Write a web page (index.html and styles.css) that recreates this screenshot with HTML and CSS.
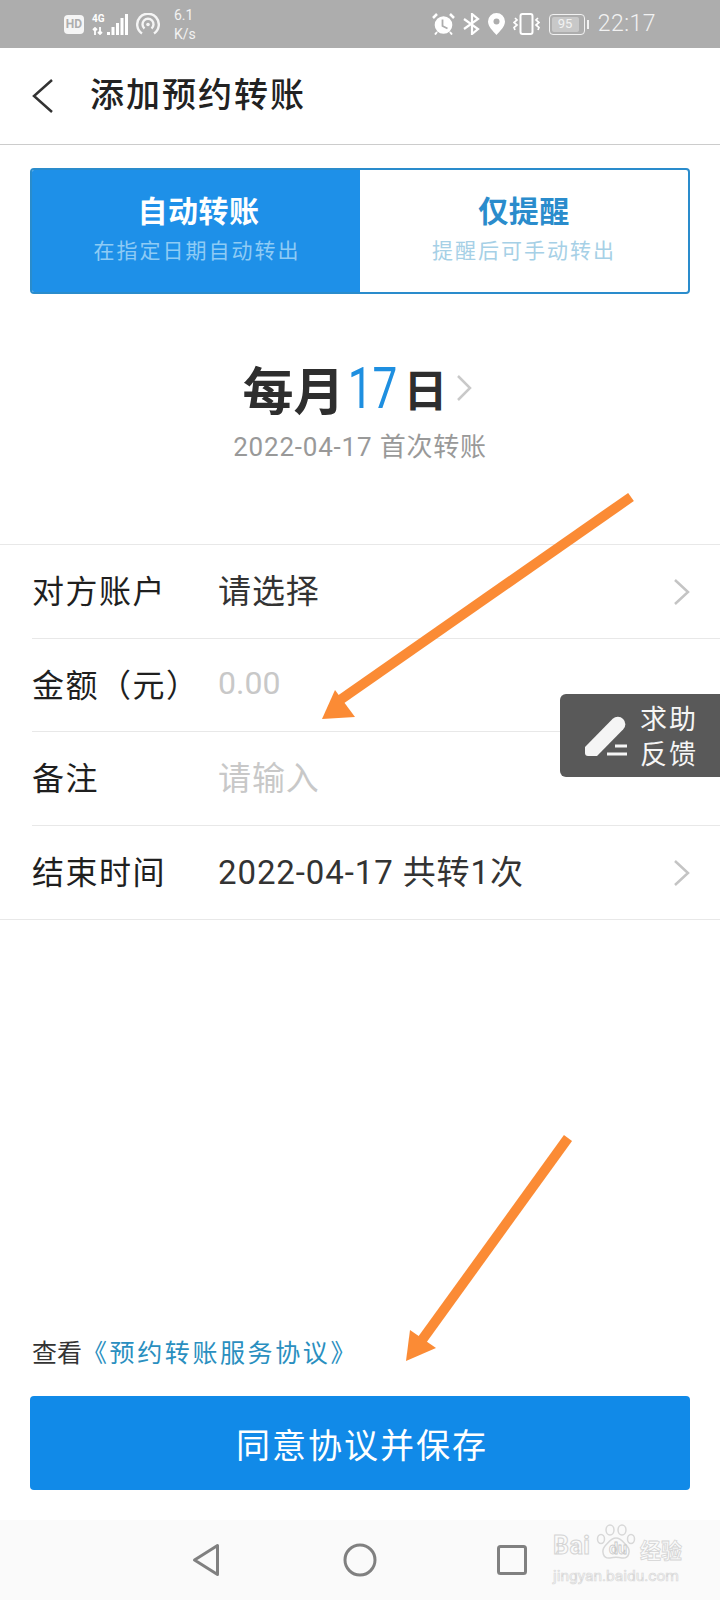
FILE: index.html
```html
<!DOCTYPE html>
<html lang="zh-CN">

<head>
    <meta charset="UTF-8">
    <meta name="viewport" content="width=device-width, initial-scale=1.0">
    <title>添加预约转账</title>
    <link rel="stylesheet" href="styles.css">
</head>

<body>

    <div class="page">

        <div class="status-bar">
            <div class="status-left">
                <span class="hd-badge">HD</span>
                <div class="signal">
                    <div class="signal-type">
                        <span class="net">4G</span>
                        <svg width="13" height="8" viewBox="0 0 13 8">
                            <path d="M3 8V1M1 3l2-2 2 2M8 0v7M6 5l2 2 2-2" fill="none" stroke="#fff" stroke-width="1.800" />
                        </svg>
                    </div>
                    <svg width="21" height="21" viewBox="0 0 21 21">
                        <rect x="0" y="18" width="3" height="3" fill="#fff" />
                        <rect x="4.500" y="13" width="3" height="8" fill="#fff" />
                        <rect x="9" y="9" width="3" height="12" fill="#fff" />
                        <rect x="13.500" y="4" width="3" height="17" fill="#fff" />
                        <rect x="18" y="0" width="3" height="21" fill="#fff" />
                    </svg>
                </div>
                <svg class="hotspot" width="24" height="22" viewBox="0 0 24 22" fill="none" stroke="#f5f5f5" stroke-width="2.400">
                    <path d="M6 20.500a10.800 10.800 0 1 1 12 0" />
                    <path d="M8.500 15.500a5.500 5.500 0 1 1 7 0" />
                    <circle cx="12" cy="11.500" r="1.800" fill="#f5f5f5" stroke="none" />
                </svg>
                <div class="speed">
                    <span>6.1</span>
                    <span>K/s</span>
                </div>
            </div>
            <div class="status-right">
                <svg width="23" height="22" viewBox="0 0 23 22">
                    <circle cx="11.500" cy="12" r="8.800" fill="#fff" />
                    <path d="M10.500 6.500v6.500l5 2.500" fill="none" stroke="#adadad" stroke-width="1.800" />
                    <path d="M1 5l4-4M22 5l-4-4" stroke="#fff" stroke-width="2.500" />
                    <path d="M5 19l-2 2.500M18 19l2 2.500" stroke="#fff" stroke-width="2" />
                </svg>
                <svg width="17" height="22" viewBox="0 0 17 22" fill="none" stroke="#fff" stroke-width="2.200">
                    <path d="M1 6l14 10-6 5V1l6 5L1 16" />
                </svg>
                <svg width="17" height="22" viewBox="0 0 17 22">
                    <path d="M8.500 0a8.500 8.500 0 0 1 8.500 8.500c0 5-5 9.500-8.500 13.500C5 18 0 13.500 0 8.500A8.500 8.500 0 0 1 8.500 0z" fill="#fff" />
                    <circle cx="8.500" cy="8.500" r="3" fill="#adadad" />
                </svg>
                <svg width="27" height="22" viewBox="0 0 27 22" fill="none" stroke="#fff" stroke-width="2">
                    <rect x="7.500" y="1" width="12" height="20" rx="2" />
                    <path d="M2 5l2 2-3 2.500 3 2.500-3 2.500L2 17M25 5l-2 2 3 2.500-3 2.500 3 2.500-1 2.500" stroke-width="1.700" />
                </svg>
                <div class="battery">
                    <div class="battery-body"><span class="battery-level">95</span></div>
                    <div class="battery-tip"></div>
                </div>
                <span class="clock">22:17</span>
            </div>
        </div>

        <div class="title-bar">
            <svg class="back" width="24" height="36" viewBox="0 0 24 36">
                <path d="M21 2L3 18l18 16" fill="none" stroke="#333" stroke-width="2.500" />
            </svg>
            <h1>添加预约转账</h1>
        </div>

        <div class="mode-tabs">
            <div class="mode-tab active">
                <div class="mode-name">自动转账</div>
                <div class="mode-desc">在指定日期自动转出</div>
            </div>
            <div class="mode-tab">
                <div class="mode-name">仅提醒</div>
                <div class="mode-desc">提醒后可手动转出</div>
            </div>
        </div>

        <div class="schedule">
            <div class="schedule-main">
                <span>每月</span><span class="day">17</span><span class="day-unit">日</span>
                <svg width="16" height="28" viewBox="0 0 16 28">
                    <path d="M2 2l12 12L2 26" fill="none" stroke="#c9c9c9" stroke-width="2.500" />
                </svg>
            </div>
            <div class="schedule-sub">2022-04-17 首次转账</div>
        </div>

        <div class="form-list">
            <div class="form-row">
                <div class="form-inner">
                    <span class="form-label">对方账户</span>
                    <span class="form-value">请选择</span>
                    <svg class="row-arrow" width="18" height="28" viewBox="0 0 18 28">
                        <path d="M2 2l13 12L2 26" fill="none" stroke="#c4c4c4" stroke-width="2.500" />
                    </svg>
                </div>
            </div>
            <div class="form-row">
                <div class="form-inner">
                    <span class="form-label">金额（元）</span>
                    <span class="form-value placeholder amount">0.00</span>
                </div>
            </div>
            <div class="form-row">
                <div class="form-inner">
                    <span class="form-label">备注</span>
                    <span class="form-value placeholder">请输入</span>
                </div>
            </div>
            <div class="form-row">
                <div class="form-inner">
                    <span class="form-label">结束时间</span>
                    <span class="form-value">2022-04-17 共转1次</span>
                    <svg class="row-arrow" width="18" height="28" viewBox="0 0 18 28">
                        <path d="M2 2l13 12L2 26" fill="none" stroke="#c4c4c4" stroke-width="2.500" />
                    </svg>
                </div>
            </div>
        </div>

        <div class="bottom-area">
            <div class="agreement">查看<a>《预约转账服务协议》</a></div>
            <button class="save-btn">同意协议并保存</button>
        </div>

        <div class="nav-bar">
            <svg class="nav-back" width="28" height="34" viewBox="0 0 28 34">
                <path d="M25.500 2.500v29L2.500 17z" fill="none" stroke="#808080" stroke-width="3" stroke-linejoin="round" />
            </svg>
            <svg class="nav-home" width="34" height="34" viewBox="0 0 34 34">
                <circle cx="17" cy="17" r="15" fill="none" stroke="#808080" stroke-width="3" />
            </svg>
            <svg class="nav-recent" width="30" height="30" viewBox="0 0 30 30">
                <rect x="1.500" y="1.500" width="27" height="27" rx="2" fill="none" stroke="#808080" stroke-width="3" />
            </svg>
        </div>

        <div class="help-float">
            <svg width="42" height="42" viewBox="0 0 42 42">
                <path d="M0 32L27.700 3.700A7.500 7.500 0 0 1 38.300 14.300L12 41H3a3 3 0 0 1-3-3z" fill="#f5f5f5" />
                <path d="M22 39h20M30 31h12" stroke="#f5f5f5" stroke-width="3" />
            </svg>
            <div class="help-text">求助<br>反馈</div>
        </div>

        <svg class="arrow-layer" width="720" height="1600" viewBox="0 0 720 1600">
            <path d="M631 497L340 700" stroke="#fb8b35" stroke-width="10" />
            <path d="M322 719l13-29 20 27z" fill="#fb8b35" />
            <path d="M568 1138L422 1340" stroke="#fb8b35" stroke-width="10" />
            <path d="M406 1361l4-31 26 18z" fill="#fb8b35" />
        </svg>

        <div class="watermark">
            <div class="watermark-logo">
                <span class="bai">Bai</span>
                <svg class="paw" width="40" height="36" viewBox="0 0 40 36" fill="none" stroke="#d8d8d8" stroke-width="1.500">
                    <ellipse cx="5" cy="15" rx="3.500" ry="4.500" />
                    <ellipse cx="14" cy="6" rx="4" ry="5" />
                    <ellipse cx="26" cy="6" rx="4" ry="5" />
                    <ellipse cx="35" cy="15" rx="3.500" ry="4.500" />
                    <path d="M20 14c-5 0-7 4-11 8-4 5-2 13 5 12 4-1 8-1 12 0 7 1 9-7 5-12-4-4-6-8-11-8z" />
                </svg>
                <span class="du">du</span>
                <span class="jy">经验</span>
            </div>
            <div class="watermark-url">jingyan.baidu.com</div>
        </div>

    </div>

</body>

</html>
```

FILE: styles.css
```css
* {
    box-sizing: border-box;
}

body {
    margin: 0;
    font-family: Roboto, "Noto Sans CJK SC", sans-serif;
    background-color: #fff;
}

.page {
    position: relative;
    display: flex;
    flex-direction: column;
    width: 720px;
    height: 1600px;
    overflow: hidden;
    background-color: #fff;
}

/* status bar */
.status-bar {
    display: flex;
    justify-content: space-between;
    align-items: center;
    flex-shrink: 0;
    height: 48px;
    padding: 0 64px 0 64px;
    background-color: #adadad;
    color: #f2f2f2;
}

.status-left,
.status-right {
    display: flex;
    align-items: center;
}

.hd-badge {
    width: 20px;
    height: 19px;
    border-radius: 4px;
    background-color: #f5f5f5;
    color: #adadad;
    font-size: 12px;
    font-weight: 700;
    line-height: 19px;
    text-align: center;
}

.signal {
    display: flex;
    align-items: flex-end;
    margin-left: 8px;
}

.signal-type {
    display: flex;
    flex-direction: column;
    justify-content: space-between;
    width: 15px;
    height: 21px;
}

.net {
    font-size: 10px;
    font-weight: 700;
    line-height: 10px;
    color: #fff;
}

.hotspot {
    margin-left: 8px;
}

.speed {
    display: flex;
    flex-direction: column;
    gap: 5px;
    margin-left: 14px;
    font-size: 14px;
    line-height: 14px;
}

.status-right {
    gap: 8px;
}

.battery {
    display: flex;
    align-items: center;
    gap: 2px;
    margin-left: 1px;
}

.battery-body {
    width: 36px;
    height: 21px;
    padding: 2px;
    border: 1.500px solid #f2f2f2;
    border-radius: 4px;
}

.battery-level {
    display: block;
    width: 27px;
    height: 100%;
    border-radius: 2px;
    background-color: #c8c8c8;
    color: #f2f2f2;
    font-size: 13px;
    line-height: 14px;
    text-align: center;
}

.battery-tip {
    width: 2px;
    height: 9px;
    background-color: #f2f2f2;
}

.clock {
    margin-left: 1px;
    font-size: 23px;
    font-weight: 300;
    line-height: 24px;
    letter-spacing: 0.500px;
}

/* title */
.title-bar {
    display: flex;
    align-items: center;
    flex-shrink: 0;
    height: 97px;
    padding-left: 31px;
    border-bottom: 1px solid #ccc;
}

.title-bar h1 {
    margin: 0 0 7px 35px;
    font-size: 34px;
    font-weight: 500;
    letter-spacing: 2px;
    color: #222;
}

/* mode tabs */
.mode-tabs {
    display: flex;
    flex-shrink: 0;
    height: 126px;
    margin: 23px 30px 0;
    border: 2px solid #2a8ccc;
    border-radius: 4px;
    overflow: hidden;
}

.mode-tab {
    display: flex;
    flex: 1;
    flex-direction: column;
    align-items: center;
    padding-top: 20px;
    color: #2a8ccc;
}

.mode-tab.active {
    background-color: #1e90e8;
    color: #fff;
}

.mode-name {
    font-size: 30px;
    font-weight: 700;
    line-height: 44px;
    letter-spacing: 0.500px;
}

.mode-tab.active .mode-name {
    margin-left: 5px;
}

.mode-desc {
    margin-top: 2px;
    font-size: 21px;
    line-height: 30px;
    letter-spacing: 2px;
    color: #a6d0e6;
}

.mode-tab.active .mode-desc {
    margin-left: 2px;
    color: #8ecbf5;
}

/* schedule */
.schedule {
    display: flex;
    flex-direction: column;
    align-items: center;
    flex-shrink: 0;
    height: 250px;
    padding-top: 59px;
}

.schedule-main {
    display: flex;
    align-items: center;
    height: 70px;
    margin-right: 6px;
    font-size: 51px;
    font-weight: 700;
    color: #2e2e2e;
}

/* the digits in the shot are tall and narrow */
.schedule-main .day {
    margin: 0 -2px 0 -4px;
    font-weight: 400;
    font-size: 58px;
    transform: scaleX(0.76);
    color: #1e8fe0;
}

.day-unit {
    font-size: 44px;
}

.schedule-main svg {
    margin-left: 8px;
}

.schedule-sub {
    margin-top: 6px;
    font-size: 26px;
    line-height: 36px;
    letter-spacing: 0.800px;
    color: #999;
}

/* form rows */
.form-list {
    flex-shrink: 0;
    border-top: 1px solid #e8e8e8;
    border-bottom: 1px solid #e8e8e8;
}

.form-row {
    padding-left: 32px;
}

.form-inner {
    display: flex;
    align-items: center;
    height: 93.500px;
    padding-right: 29px;
    padding-bottom: 4px;
    border-bottom: 1px solid #e8e8e8;
}

.form-row:last-child .form-inner {
    border-bottom: none;
}

.form-label {
    flex-shrink: 0;
    width: 186px;
    font-size: 32px;
    letter-spacing: 1.500px;
    color: #1f1f1f;
}

.form-value {
    font-size: 33px;
    letter-spacing: 0.900px;
    color: #333;
}

.placeholder {
    color: #c8c8c8;
}

.amount {
    font-size: 32px;
    letter-spacing: 0;
}

.row-arrow {
    margin-top: 5px;
    margin-left: auto;
}

/* bottom */
.bottom-area {
    display: flex;
    flex: 1;
    flex-direction: column;
    justify-content: flex-end;
    padding: 0 30px 30px;
}

.agreement {
    margin-bottom: 24px;
    padding-left: 2px;
    font-size: 25px;
    line-height: 36px;
    color: #333;
}

.agreement a {
    letter-spacing: 2.600px;
    color: #2a8fc0;
}

.save-btn {
    height: 94px;
    padding: 0 0 0 4px;
    border: none;
    border-radius: 4px;
    background-color: #118ae8;
    color: #fff;
    font-family: inherit;
    font-size: 34px;
    letter-spacing: 2px;
}

.nav-bar {
    display: flex;
    align-items: center;
    flex-shrink: 0;
    height: 80px;
    padding-left: 192px;
    background-color: #fafafa;
}

.nav-home {
    margin-left: 123px;
}

.nav-recent {
    margin-left: 120px;
}

/* floating items */
.help-float {
    position: absolute;
    top: 694px;
    right: 0;
    display: flex;
    align-items: center;
    width: 160px;
    height: 83px;
    padding-left: 25px;
    border-radius: 6px 0 0 6px;
    background-color: #595959;
}

.help-text {
    margin: 5px 0 0 13px;
    font-size: 27px;
    line-height: 35px;
    letter-spacing: 2px;
    color: #f5f5f5;
}

.arrow-layer {
    position: absolute;
    top: 0;
    left: 0;
}

.watermark {
    position: absolute;
    top: 1522px;
    left: 553px;
    width: 130px;
    color: #fafafa;
}

.watermark-logo {
    display: flex;
    align-items: flex-end;
    height: 38px;
    font-weight: 700;
}

.bai {
    flex-shrink: 0;
    width: 44px;
    font-size: 25px;
    line-height: 28px;
    letter-spacing: 0.500px;
    -webkit-text-stroke: 1px #d4d4d4;
}

.paw {
    flex-shrink: 0;
    margin: 0 -36px 0 -1px;
}

.du {
    flex-shrink: 0;
    width: 36px;
    font-size: 16px;
    line-height: 22px;
    text-align: center;
    -webkit-text-stroke: 0.800px #c8c8c8;
}

.jy {
    flex-shrink: 0;
    margin-bottom: -3px;
    margin-left: 4px;
    font-size: 21px;
    line-height: 24px;
    -webkit-text-stroke: 0.800px #d4d4d4;
}

.watermark-url {
    margin-top: 7px;
    font-size: 15.500px;
    line-height: 18px;
    -webkit-text-stroke: 0.700px #d8d8d8;
}
```
